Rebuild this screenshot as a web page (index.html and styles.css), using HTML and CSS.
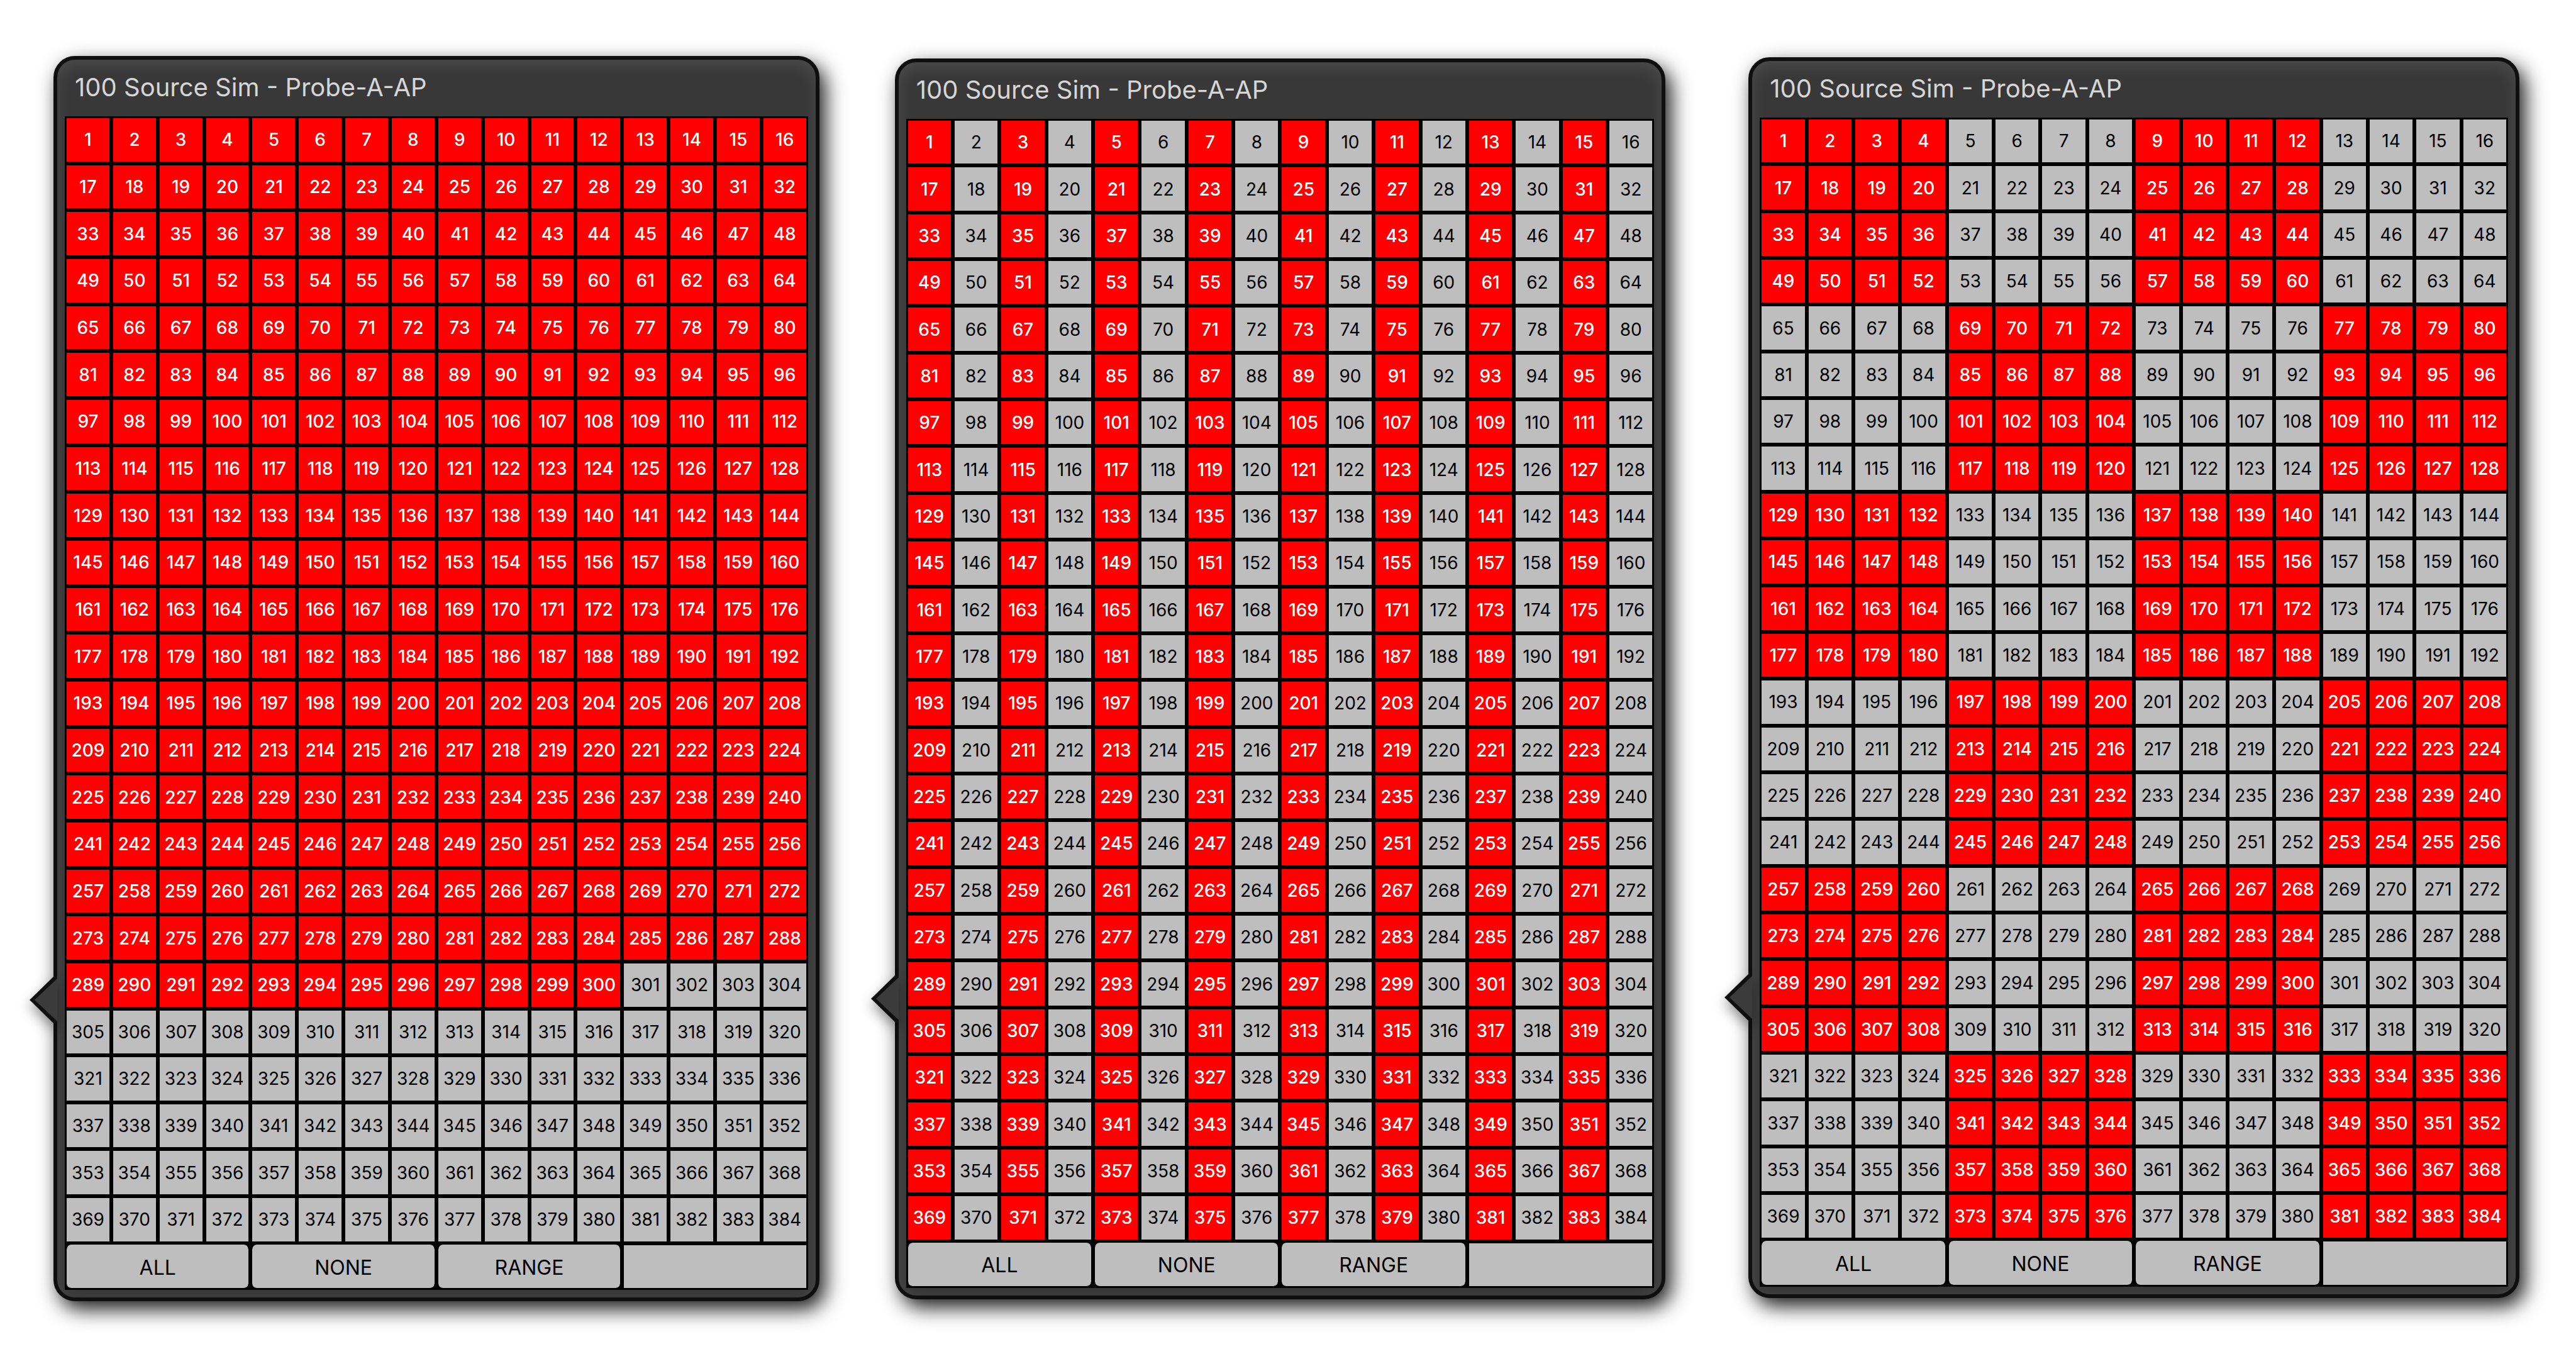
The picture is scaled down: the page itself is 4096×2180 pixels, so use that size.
FILE: index.html
```html
<!DOCTYPE html>
<html lang="en">
<head>
<meta charset="utf-8">
<title>100 Source Sim</title>
<link rel="stylesheet" href="styles.css">
</head>
<body>
<main class="board">
  <section class="panel panel-all" data-pattern="first300">
    <svg class="pointer" viewBox="0 0 48 76" aria-hidden="true"><path class="pointer-edge" d="M48 1 H42 L4 38 L42 75 H48 Z"/><path class="pointer-fill" d="M48 4 L12 38 L48 72 Z"/></svg>
    <h2 class="title">100 Source Sim - Probe-A-AP</h2>
    <div class="grid"></div>
  </section>
  <section class="panel panel-odd" data-pattern="odd">
    <svg class="pointer" viewBox="0 0 48 76" aria-hidden="true"><path class="pointer-edge" d="M48 1 H42 L4 38 L42 75 H48 Z"/><path class="pointer-fill" d="M48 4 L12 38 L48 72 Z"/></svg>
    <h2 class="title">100 Source Sim - Probe-A-AP</h2>
    <div class="grid"></div>
  </section>
  <section class="panel panel-checker" data-pattern="checker">
    <svg class="pointer" viewBox="0 0 48 76" aria-hidden="true"><path class="pointer-edge" d="M48 1 H42 L4 38 L42 75 H48 Z"/><path class="pointer-fill" d="M48 4 L12 38 L48 72 Z"/></svg>
    <h2 class="title">100 Source Sim - Probe-A-AP</h2>
    <div class="grid"></div>
  </section>
</main>
<script src="script.js"></script>
</body>
</html>
```
FILE: styles.css
```css
* { box-sizing: border-box; }

body {
  margin: 0;
  background: #fff;
  font-family: Inter, "Liberation Sans", sans-serif;
}

.board {
  display: grid;
  grid-template-columns: 1218fr 1226fr 1238fr;
  column-gap: 120px;
  align-items: start;
  min-height: 100vh;
  padding: 89px 90px 90px 85px;
}

.panel {
  position: relative;
  padding: 0 12px 12px;
  border: 6px solid #0f0f0f;
  border-radius: 34px;
  background: #383838;
  box-shadow: 9px 13px 32px rgba(0, 0, 0, 0.9), inset 0 8px 24px rgba(255, 255, 255, 0.1);
}

.panel-odd { margin-top: 4px; }
.panel-checker { margin: 2px 0 0 12px; }

.pointer {
  position: absolute;
  left: -48px;
  top: 74%;
  width: 48px;
  height: 76px;
  overflow: visible;
}

.pointer-fill { fill: #3b3b3b; }

.pointer-edge {
  fill: #0f0f0f;
  filter: drop-shadow(0 10px 10px rgba(0, 0, 0, 0.4));
}

.title {
  margin: 0;
  padding: 0 16px;
  height: 90px;
  font-size: 40px;
  font-weight: 400;
  line-height: 88px;
  color: #d6d6d6;
}

.grid {
  display: grid;
  grid-template-columns: repeat(16, 1fr);
  grid-template-rows: repeat(25, 1fr);
  aspect-ratio: 16 / 25;
  background: #000;
}

.panel-all .grid { aspect-ratio: 1182 / 1867; }

.cell,
.action {
  min-width: 0;
  min-height: 0;
  margin: 0;
  padding: 0;
  border: 3px solid #000;
  background: #bebebe;
  background-clip: padding-box;
  color: #000;
  font-family: inherit;
  font-size: 28px;
  line-height: 32px;
}

.cell[aria-pressed="true"] {
  background-color: #f00;
  color: #fff;
  font-weight: 500;
}

.action {
  grid-column: span 4;
  padding-top: 4px;
  border-top-width: 2px;
  border-radius: 10px;
  font-size: 32px;
}

.action-empty {
  border-top-width: 3px;
  border-radius: 0;
}
```
FILE: script.js
```js
const COLUMNS = 16;
const CHANNELS = 384;

const patterns = {
  first300: (n) => n <= 300,
  odd: (n) => n % 2 === 1,
  checker: (n) => {
    const blockRow = Math.floor((n - 1) / COLUMNS / 4);
    const blockColumn = Math.floor(((n - 1) % COLUMNS) / 4);
    return (blockRow + blockColumn) % 2 === 0;
  },
};

document.querySelectorAll(".panel").forEach((panel) => {
  const grid = panel.querySelector(".grid");
  const isOn = patterns[panel.dataset.pattern];

  for (let n = 1; n <= CHANNELS; n += 1) {
    const cell = document.createElement("button");
    cell.type = "button";
    cell.className = "cell";
    cell.textContent = n;
    cell.setAttribute("aria-pressed", String(isOn(n)));
    grid.append(cell);
  }

  ["ALL", "NONE", "RANGE"].forEach((label) => {
    const action = document.createElement("button");
    action.type = "button";
    action.className = "action";
    action.textContent = label;
    grid.append(action);
  });

  const empty = document.createElement("div");
  empty.className = "action action-empty";
  grid.append(empty);
});
```
